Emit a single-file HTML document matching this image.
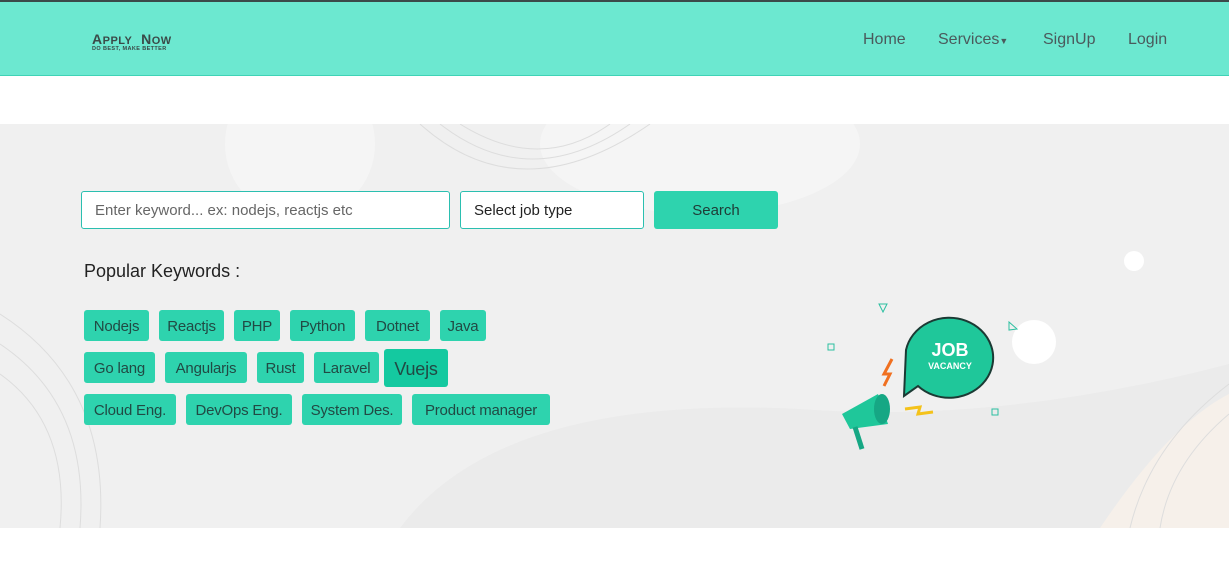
<!DOCTYPE html>
<html><head><style>
*{margin:0;padding:0;box-sizing:border-box}
body{width:1229px;height:579px;background:#fff;font-family:"Liberation Sans",sans-serif;position:relative;overflow:hidden}
.nav{position:absolute;left:0;top:0;width:1229px;height:76px;background:#6ce8d0;border-top:2px solid #3b4a4a;border-bottom:1px solid #3fd3b6}
.nav a{position:absolute;top:29px;font-size:16px;color:#4a5a5c}
.hero{position:absolute;left:0;top:124px;width:1229px;height:404px;background:#f0f0f0;overflow:hidden}
.t{position:absolute;height:31px;background:#2ed3ae;border-radius:3px;color:#214a44;font-size:15px;line-height:33px;text-align:center;letter-spacing:-.2px}
.in{position:absolute;height:38px;border:1px solid #2bbfb0;border-radius:3px;background:#fff;font-size:15px;line-height:38px;padding-left:13px}
</style></head><body>
<div class="nav">
<div style="position:absolute;left:92px;top:29px;font-size:14px;font-weight:bold;color:#3a4a48;letter-spacing:.5px">A<span style="font-size:11px">PPLY</span>&nbsp; N<span style="font-size:11px">OW</span></div>
<div style="position:absolute;left:92px;top:44px;font-size:5.5px;color:#3a4a48;font-weight:bold;letter-spacing:.4px">DO BEST, MAKE BETTER</div>
<a style="left:863px">Home</a><a style="left:938px">Services<span style="font-size:9px">&#9660;</span></a><a style="left:1043px">SignUp</a><a style="left:1128px">Login</a>
</div>
<div class="hero">
<svg width="1229" height="404" style="position:absolute;left:0;top:0">
<circle cx="300" cy="20" r="75" fill="#f5f5f5"/>
<ellipse cx="700" cy="20" rx="160" ry="70" fill="#f5f5f5"/>
<path d="M420 0 Q520 90 650 0 M440 0 Q530 70 630 0 M460 0 Q540 50 610 0" stroke="#ddd" fill="none"/>
<path d="M400 404 Q500 270 800 285 Q1000 300 1229 240 L1229 404Z" fill="#ebebeb"/>
<path d="M1100 404 Q1170 300 1229 270 L1229 404Z" fill="#f6f0ea"/>
<path d="M0 220 Q90 280 80 404 M0 250 Q70 300 60 404 M0 190 Q110 260 100 404" stroke="#ddd" fill="none"/>
<path d="M1229 260 Q1150 320 1130 404 M1229 290 Q1170 340 1160 404" stroke="#ddd" fill="none"/>
<circle cx="1134" cy="137" r="10" fill="#fff"/>
<circle cx="1034" cy="218" r="22" fill="#fff"/>
<path d="M906 226 A44 40 0 1 1 918 262 L904 272 Z" fill="#1fc79a" stroke="#1b3a34" stroke-width="2"/>
<text x="950" y="232" font-size="18" font-weight="bold" fill="#fff" text-anchor="middle" font-family="Liberation Sans">JOB</text>
<text x="950" y="245" font-size="9" font-weight="bold" fill="#fff" text-anchor="middle" font-family="Liberation Sans">VACANCY</text>
<path d="M842 290 L878 270 L888 300 L850 305 Z" fill="#1fc79a"/>
<ellipse cx="882" cy="285" rx="8" ry="15" fill="#16a784"/>
<path d="M855 303 L862 325" stroke="#16a784" stroke-width="5"/>
<path d="M892 235 L884 250 L890 250 L884 262" stroke="#f07020" stroke-width="3" fill="none"/>
<path d="M905 285 L920 283 L918 290 L933 288" stroke="#f4c21a" stroke-width="3" fill="none"/>
<rect x="828" y="220" width="6" height="6" fill="none" stroke="#2bbfa0"/>
<rect x="992" y="285" width="6" height="6" fill="none" stroke="#2bbfa0"/>
<path d="M879 180 L887 180 L883 188Z M1009 198 L1017 205 L1009 206Z" fill="none" stroke="#2bbfa0"/>
</svg>
<div class="in" style="left:81px;top:67px;width:369px;color:#666">Enter keyword... ex: nodejs, reactjs etc</div>
<div class="in" style="left:460px;top:67px;width:184px;color:#222">Select job type</div>
<div style="position:absolute;left:654px;top:67px;width:124px;height:38px;background:#2ed3ae;border-radius:3px;text-align:center;line-height:40px;font-size:15px;color:#1f3b36">Search</div>
<div style="position:absolute;left:84px;top:137px;font-size:18px;color:#222">Popular Keywords :</div>
<div class="t" style="left:84px;top:186px;width:65px">Nodejs</div>
<div class="t" style="left:159px;top:186px;width:65px">Reactjs</div>
<div class="t" style="left:234px;top:186px;width:46px">PHP</div>
<div class="t" style="left:290px;top:186px;width:65px">Python</div>
<div class="t" style="left:365px;top:186px;width:65px">Dotnet</div>
<div class="t" style="left:440px;top:186px;width:46px">Java</div>
<div class="t" style="left:84px;top:228px;width:71px">Go lang</div>
<div class="t" style="left:165px;top:228px;width:82px">Angularjs</div>
<div class="t" style="left:257px;top:228px;width:47px">Rust</div>
<div class="t" style="left:314px;top:228px;width:65px">Laravel</div>
<div class="t" style="left:384px;top:225px;width:64px;height:38px;line-height:40px;font-size:18px;background:#14c9a0">Vuejs</div>
<div class="t" style="left:84px;top:270px;width:92px">Cloud Eng.</div>
<div class="t" style="left:186px;top:270px;width:106px">DevOps Eng.</div>
<div class="t" style="left:302px;top:270px;width:100px">System Des.</div>
<div class="t" style="left:412px;top:270px;width:138px">Product manager</div>
</div>
</body></html>
